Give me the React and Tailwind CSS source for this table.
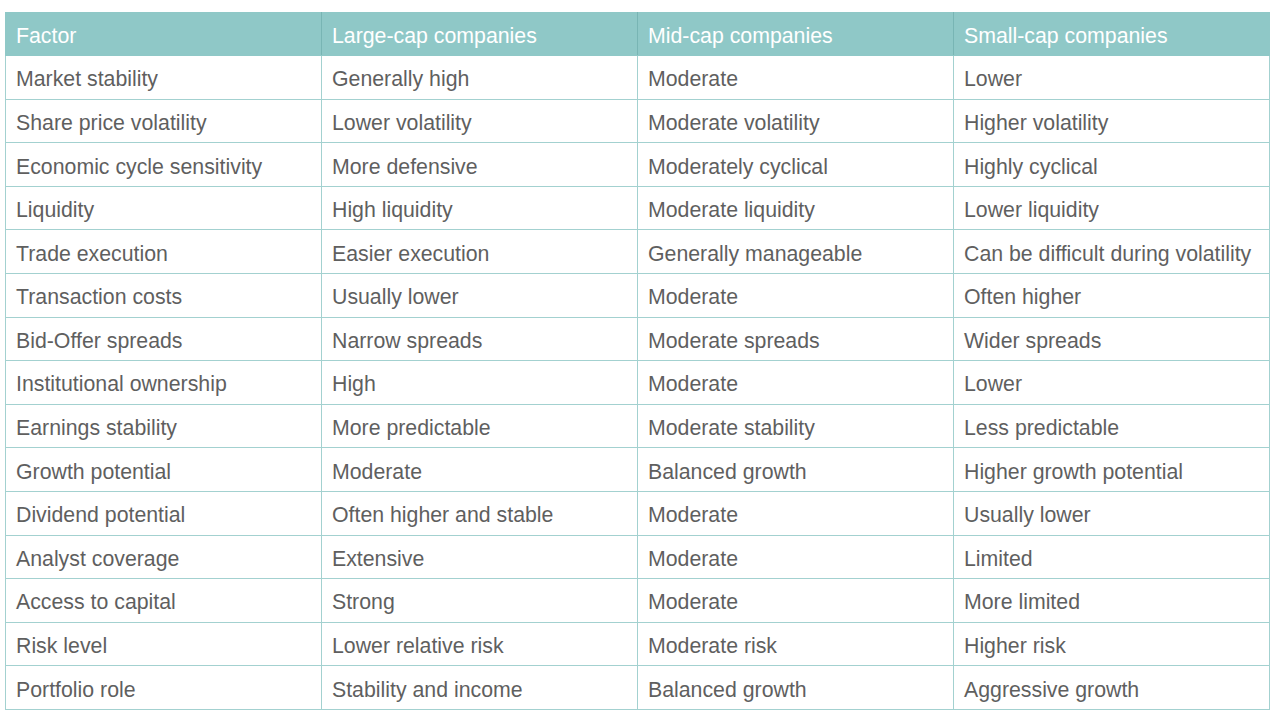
import React from 'react';

const headers = ['Factor', 'Large-cap companies', 'Mid-cap companies', 'Small-cap companies'];

const rows = [
  ['Market stability', 'Generally high', 'Moderate', 'Lower'],
  ['Share price volatility', 'Lower volatility', 'Moderate volatility', 'Higher volatility'],
  ['Economic cycle sensitivity', 'More defensive', 'Moderately cyclical', 'Highly cyclical'],
  ['Liquidity', 'High liquidity', 'Moderate liquidity', 'Lower liquidity'],
  ['Trade execution', 'Easier execution', 'Generally manageable', 'Can be difficult during volatility'],
  ['Transaction costs', 'Usually lower', 'Moderate', 'Often higher'],
  ['Bid-Offer spreads', 'Narrow spreads', 'Moderate spreads', 'Wider spreads'],
  ['Institutional ownership', 'High', 'Moderate', 'Lower'],
  ['Earnings stability', 'More predictable', 'Moderate stability', 'Less predictable'],
  ['Growth potential', 'Moderate', 'Balanced growth', 'Higher growth potential'],
  ['Dividend potential', 'Often higher and stable', 'Moderate', 'Usually lower'],
  ['Analyst coverage', 'Extensive', 'Moderate', 'Limited'],
  ['Access to capital', 'Strong', 'Moderate', 'More limited'],
  ['Risk level', 'Lower relative risk', 'Moderate risk', 'Higher risk'],
  ['Portfolio role', 'Stability and income', 'Balanced growth', 'Aggressive growth'],
];

export default function App() {
  return (
    <div className="bg-white w-[1280px] h-[717px] pt-[12px] pl-[5px]" style={{ fontFamily: '"Liberation Sans", Arial, sans-serif' }}>
      <table className="w-[1265px] border-collapse table-fixed text-[21.3px]">
        <thead>
          <tr className="bg-[#8fc8c7] h-[43px]">
            {headers.map((h) => (
              <th key={h} className="text-left font-normal text-white pl-[10px] pt-[6px] border border-[#8fc8c7] border-r-[#78b5b4] last:border-r-[#8fc8c7]">
                {h}
              </th>
            ))}
          </tr>
        </thead>
        <tbody>
          {rows.map((r) => (
            <tr key={r[0]} className="h-[43.6px]">
              {r.map((c, i) => (
                <td key={i} className="text-[#5f5f5f] pl-[10px] pt-[6px] border border-[#a3d1d0] whitespace-nowrap">
                  {c}
                </td>
              ))}
            </tr>
          ))}
        </tbody>
      </table>
    </div>
  );
}
